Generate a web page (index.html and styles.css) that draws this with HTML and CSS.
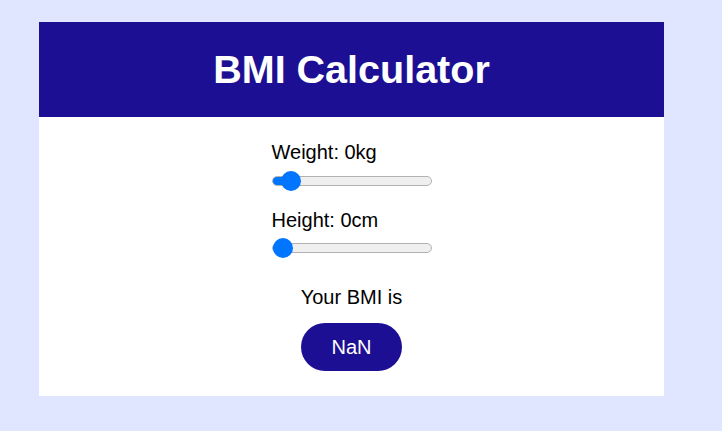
FILE: index.html
```html
<!DOCTYPE html>
<html>
<head>
<meta charset="utf-8">
<link rel="stylesheet" href="styles.css">
</head>
<body>
<div class="card">
  <div class="header"><h1 class="title">BMI Calculator</h1></div>
  <div class="content">
    <div class="fields">
      <div class="field">
        <label class="label" for="w">Weight: 0kg</label>
        <input class="slider" id="w" type="range" min="0" max="140" value="9" style="--fill: 19px">
      </div>
      <div class="field field-second">
        <label class="label" for="h">Height: 0cm</label>
        <input class="slider" id="h" type="range" min="0" max="140" value="0" style="--fill: 10px">
      </div>
    </div>
    <p class="result-label">Your BMI is</p>
    <div class="result">NaN</div>
  </div>
</div>
</body>
</html>
```
FILE: styles.css
```css
body {
  margin: 0;
  background: #e0e6ff;
  font-family: "Liberation Sans", Arial, sans-serif;
  color: #000;
}
.card {
  margin: 22px 0 0 39px;
  width: 625px;
  background: #fff;
  padding-bottom: 25px;
}
.header {
  height: 95px;
  background: #1d0f94;
  display: flex;
  align-items: center;
  justify-content: center;
}
.title {
  margin: 0;
  color: #fff;
  font-size: 39.5px;
  font-weight: bold;
}
.content {
  display: flex;
  flex-direction: column;
  align-items: center;
  padding-top: 24px;
}
.fields {
  width: 160px;
}
.field-second {
  margin-top: 18px;
}
.label {
  display: block;
  font-size: 20px;
  line-height: 23px;
}
.slider {
  -webkit-appearance: none;
  appearance: none;
  display: block;
  width: 160px;
  height: 20px;
  margin: 7px 0 0;
  padding: 0;
  background: transparent;
}
.field-second .slider {
  margin-top: 6px;
}
.slider::-webkit-slider-runnable-track {
  box-sizing: border-box;
  height: 10px;
  border: 1px solid #b2b2b2;
  border-radius: 5px;
  background: linear-gradient(to right, #0075ff var(--fill), #efefef var(--fill));
}
.slider::-webkit-slider-thumb {
  -webkit-appearance: none;
  appearance: none;
  width: 20px;
  height: 20px;
  margin-top: -6px;
  border: none;
  border-radius: 50%;
  background: #0075ff;
}
.result-label {
  margin: 28px 0 0;
  font-size: 20px;
  line-height: 23px;
}
.result {
  margin-top: 14px;
  width: 101px;
  height: 48px;
  border-radius: 24px;
  background: #1d0f94;
  color: #fff;
  font-size: 20px;
  display: flex;
  align-items: center;
  justify-content: center;
}
```
